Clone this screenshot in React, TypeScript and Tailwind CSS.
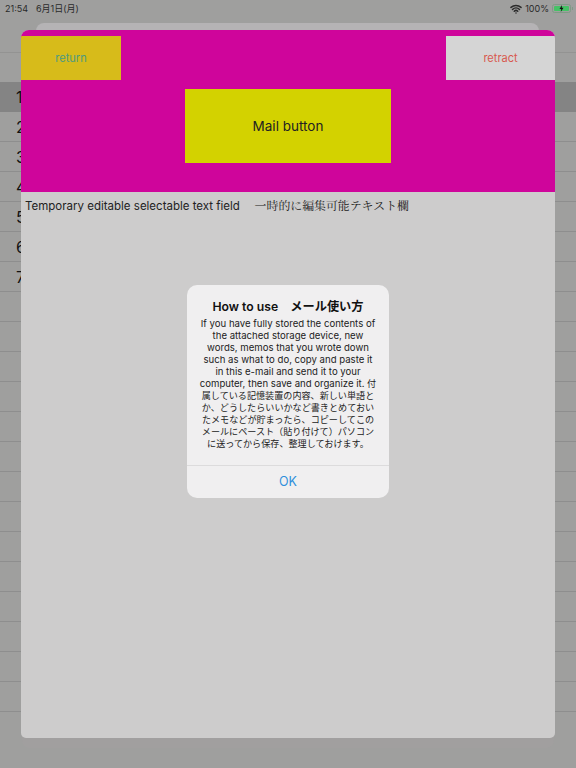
import { Wifi } from "lucide-react";

const ROWS = ["1", "2", "3", "4", "5", "6", "7", "", "", "", "", "", "", "", "", "", "", "", "", "", ""];

const FONT = "font-['Inter','Noto_Sans_CJK_JP',sans-serif]";

const Battery = () => (
  <div className="relative flex h-[9px] w-[19px] items-center rounded-[2.5px] border border-[#7f9a86] p-[1px]">
    <div className="h-full w-full rounded-[1px] bg-[#45c266]" />
    <svg className="absolute left-[5px] top-0 h-[7px] w-[7px]" viewBox="0 0 10 14">
      <path d="M6 0 1 8h3.5L3.5 14 9 5.500H5.500z" fill="#111" />
    </svg>
    <div className="absolute -right-[2.5px] top-[2px] h-[3px] w-[1px] bg-[#7f9a86]" />
  </div>
);

const StatusBar = () => (
  <div className="flex h-[16px] items-center justify-between pl-[5px] pr-[5px] pt-[1px] text-[9px] text-[#2a2a2a]">
    <div className="flex gap-[8px]">
      <span>21:54</span>
      <span>6月1日(月)</span>
    </div>
    <div className="flex items-center gap-[3px]">
      <Wifi size={12} strokeWidth={3} />
      <span>100%</span>
      <Battery />
    </div>
  </div>
);

export default function App() {
  return (
    <div className={`relative h-[768px] w-[576px] overflow-hidden bg-[#9f9f9e] ${FONT}`}>
      <StatusBar />

      {/* table behind the sheet */}
      <div className="mt-[36px] flex h-[30px] border-t border-[#939392]" />
      <div className="flex h-[30px] items-center bg-[#848484] pl-[16px] text-[16px] text-[#111]">1</div>
      {ROWS.slice(1).map((n, i) => (
        <div key={i} className="flex h-[30px] items-center border-b border-[#8e8e8e] pl-[16px] text-[16px] text-[#111]">
          {n}
        </div>
      ))}

      {/* sheet */}
      <div className="absolute left-[36px] top-[23px] h-[20px] w-[503px] rounded-t-[8px] bg-[#b5b3b5]" />
      <div className="absolute bottom-[20px] left-[22px] h-[20px] w-[532px] rounded-b-[8px] bg-[#a19f9f]" />
      <div className="absolute left-[21px] top-[30px] flex h-[708px] w-[534px] flex-col overflow-hidden rounded-b-[5px] rounded-t-[8px] bg-[#cdcccc]">
        <div className="relative h-[162px] shrink-0 bg-[#cf059b]">
          <div className="flex items-start justify-between pt-[6px]">
            <div className="flex h-[44px] w-[100px] items-center justify-center bg-[#d7bb1a] pt-[1px] text-[11px] text-[#4f9a80]">
              return
            </div>
            <div className="flex h-[44px] w-[109px] items-center justify-center bg-[#d5d5d5] pt-[1px] text-[11px] text-[#d8594f]">
              retract
            </div>
          </div>
          <div className="mx-auto mt-[9px] flex h-[74px] w-[206px] items-center justify-center bg-[#d3d200] text-[13.500px] text-[#222]">
            Mail button
          </div>
        </div>
        <div className="pl-[4px] pt-[4px] text-[11.500px] leading-[17px] text-[#222]">
          Temporary editable selectable text field　 <span className="font-['Noto_Serif_CJK_JP','Liberation_Serif','Noto_Sans_CJK_JP',serif] text-[11.900px]">一時的に編集可能テキスト欄</span>
        </div>
      </div>

      {/* alert */}
      <div className="absolute left-[187px] top-[285px] flex h-[213px] w-[202px] flex-col rounded-[10px] bg-[#f0eff0]">
        <div className="px-[10px] pt-[15px] text-center text-[12.200px] font-semibold leading-[14px] text-[#111]">
          How to use　メール使い方
        </div>
        <p className="mt-[4px] px-[12px] text-center text-[9.600px] leading-[12px] text-[#222]">
          If you have fully stored the contents of the attached storage device, new words, memos that you wrote down such as what to do, copy and paste it in this e-mail and send it to your computer, then save and organize it. <span className="text-[9.100px]">付属している記憶装置の内容、新しい単語とか、どうしたらいいかなど書きとめておいたメモなどが貯まったら、コピーしてこのメールにペースト（貼り付けて）パソコンに送ってから保存、整理しておけます。</span>
        </p>
        <div className="mt-auto flex h-[33px] items-center justify-center border-t border-[#dcdbdc] text-[12.500px] text-[#2f8fdc]">
          OK
        </div>
      </div>
    </div>
  );
}
